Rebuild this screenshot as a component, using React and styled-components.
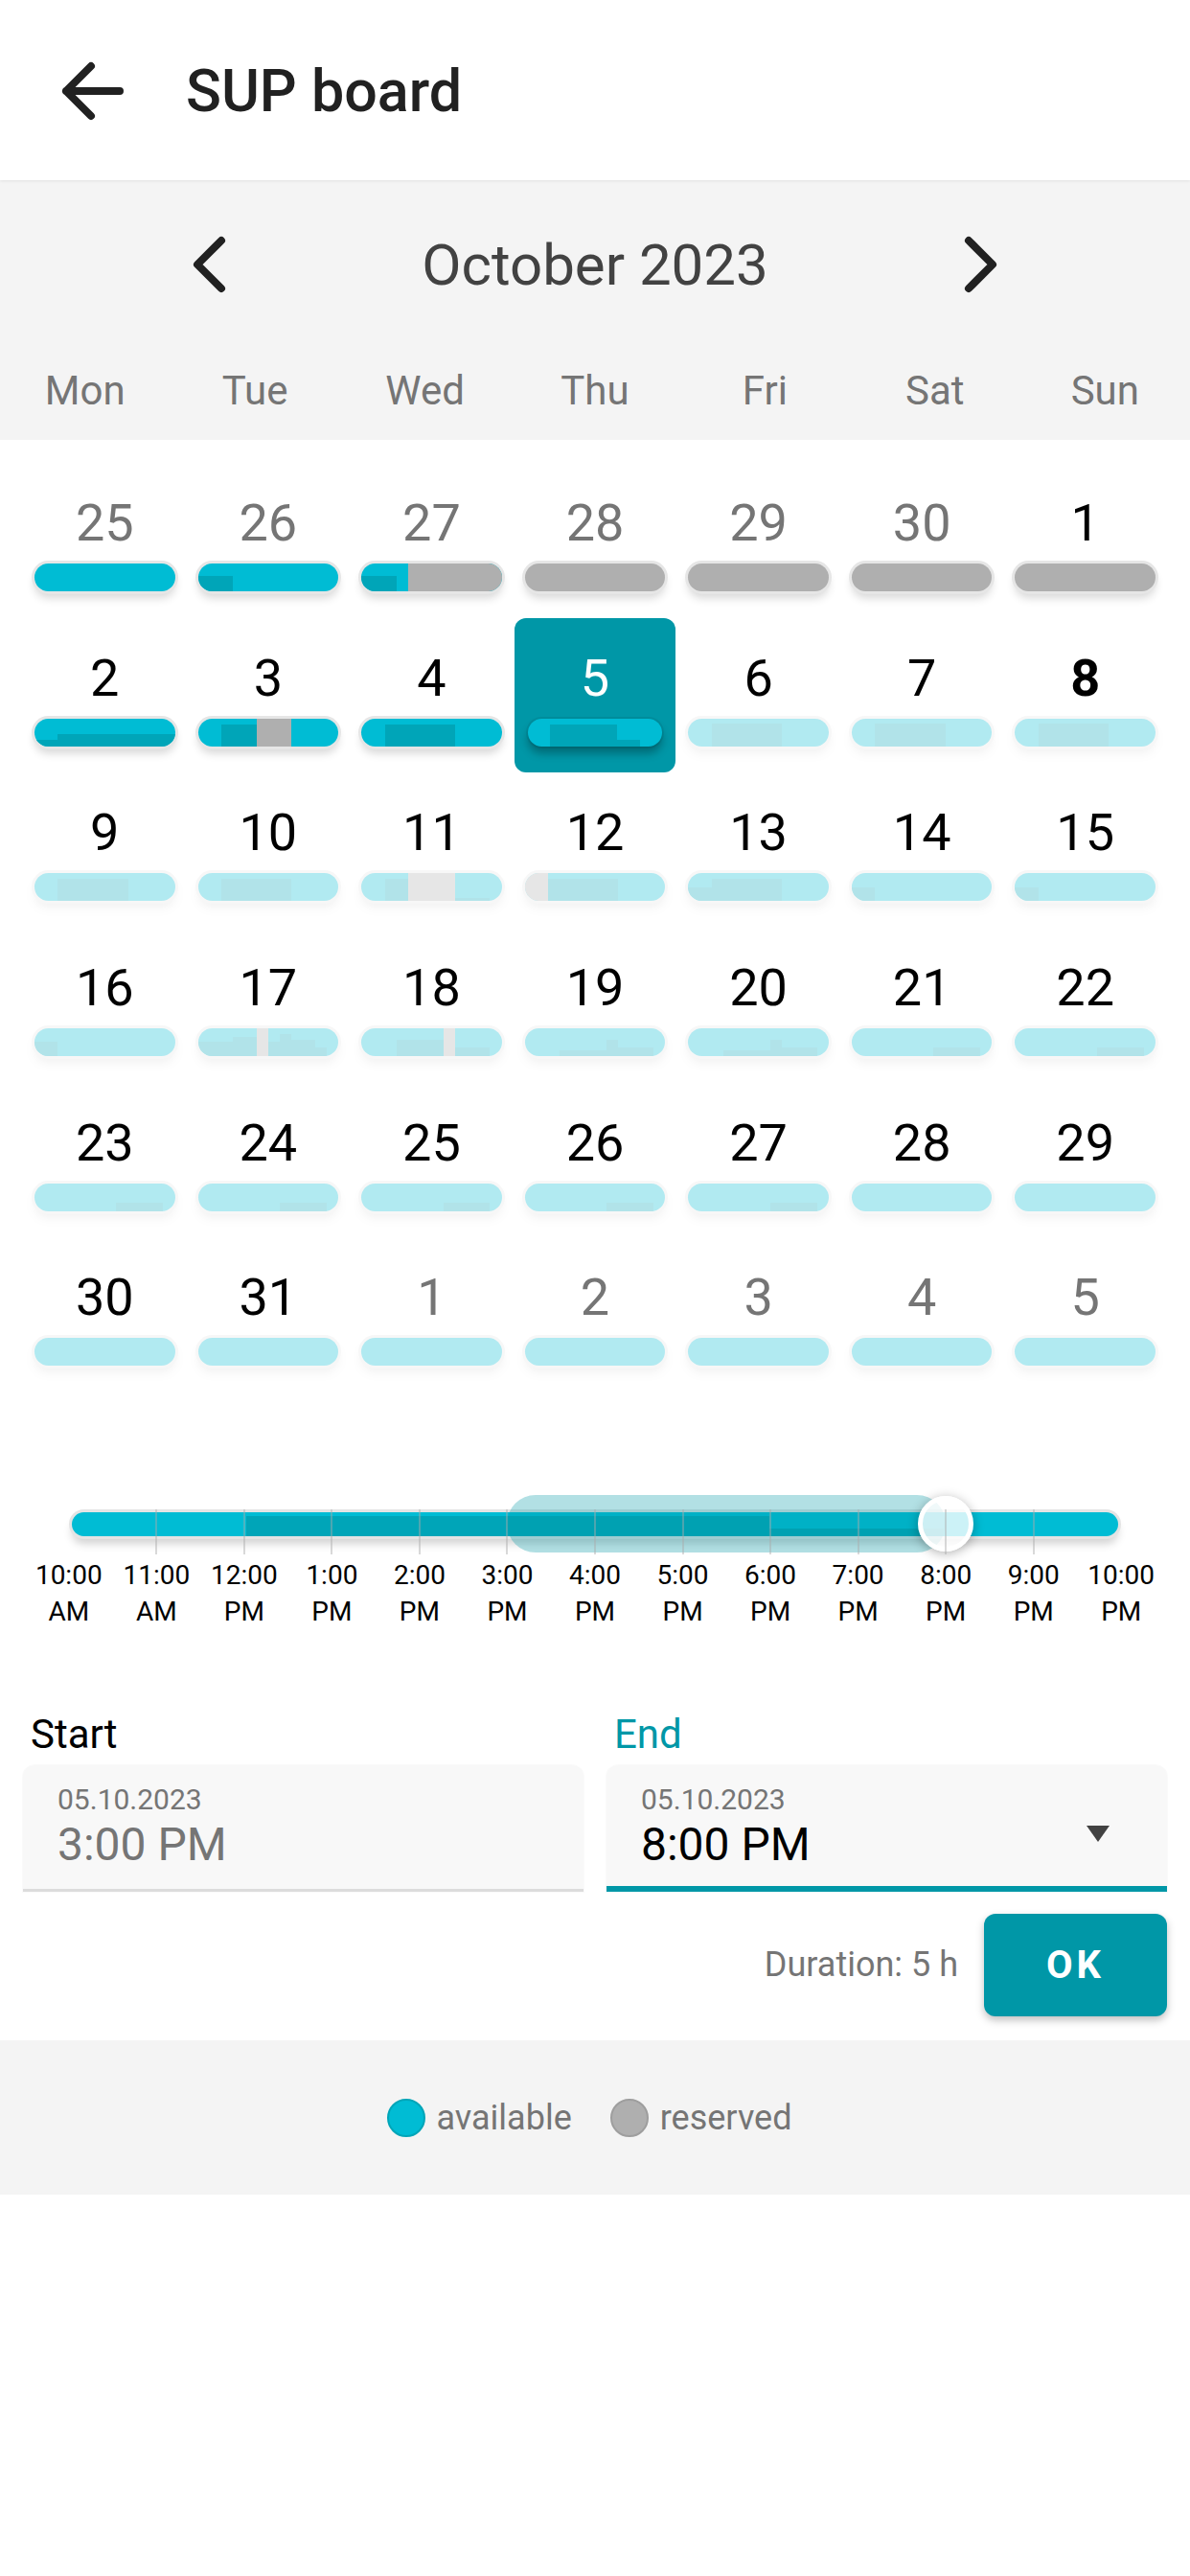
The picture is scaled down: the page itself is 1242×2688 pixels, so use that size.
import styled, { createGlobalStyle } from 'styled-components';

const CYAN = '#00bcd4';
const DARK = '#00a5b8';
const GREY = '#afafaf';
const TEAL = '#0097a7';

const GlobalStyle = createGlobalStyle`
  html, body {
    margin: 0;
    padding: 0;
    background: #fff;
  }
  body {
    font-family: Roboto, "Noto Sans", Arial, sans-serif;
    -webkit-font-smoothing: antialiased;
  }
  * {
    box-sizing: border-box;
  }
`;

// segments: [fromHour, toHour, heightPercent, reserved?]
const weeks = [
    [
        {n: 25, out: true, segs: []},
        {n: 26, out: true, segs: [[0, 3, 55]]},
        {n: 27, out: true, segs: [[0, 3, 55], [4, 12, 100, true]]},
        {n: 28, out: true, res: true, segs: []},
        {n: 29, out: true, res: true, segs: []},
        {n: 30, out: true, res: true, segs: []},
        {n: 1, res: true, segs: []},
    ],
    [
        {n: 2, segs: [[0, 2, 22], [2, 12, 44]]},
        {n: 3, segs: [[2, 5, 79], [5, 8, 100, true]]},
        {n: 4, segs: [[2, 8, 79]]},
        {n: 5, selected: true, segs: [[2, 8, 79], [8, 10, 22]]},
        {n: 6, pale: true, segs: [[2, 8, 80]]},
        {n: 7, pale: true, segs: [[2, 8, 80]]},
        {n: 8, pale: true, bold: true, segs: [[2, 8, 80]]},
    ],
    [
        {n: 9, pale: true, segs: [[2, 8, 80]]},
        {n: 10, pale: true, segs: [[2, 8, 80]]},
        {n: 11, pale: true, segs: [[2, 4, 80], [4, 8, 100, true], [8, 11, 10]]},
        {n: 12, pale: true, segs: [[0, 2, 100, true], [2, 8, 80]]},
        {n: 13, pale: true, segs: [[0, 2, 50], [2, 8, 80]]},
        {n: 14, pale: true, segs: [[0, 2, 50]]},
        {n: 15, pale: true, segs: [[0, 2, 50]]},
    ],
    [
        {n: 16, pale: true, segs: [[0, 2, 50]]},
        {n: 17, pale: true, segs: [[0, 3, 50], [3, 5, 70], [5, 6, 100, true], [6, 7, 50], [7, 8, 80], [8, 10, 60], [10, 11, 30]]},
        {n: 18, pale: true, segs: [[3, 7, 60], [7, 8, 100, true], [8, 11, 30]]},
        {n: 19, pale: true, segs: [[3, 7, 20], [7, 8, 60], [8, 11, 30]]},
        {n: 20, pale: true, segs: [[3, 7, 20], [7, 8, 60], [8, 11, 30]]},
        {n: 21, pale: true, segs: [[7, 11, 30]]},
        {n: 22, pale: true, segs: [[7, 11, 30]]},
    ],
    [
        {n: 23, pale: true, segs: [[7, 11, 30]]},
        {n: 24, pale: true, segs: [[7, 11, 30]]},
        {n: 25, pale: true, segs: [[7, 11, 30]]},
        {n: 26, pale: true, segs: [[7, 11, 30]]},
        {n: 27, pale: true, segs: [[7, 11, 30]]},
        {n: 28, pale: true, segs: []},
        {n: 29, pale: true, segs: []},
    ],
    [
        {n: 30, pale: true, segs: []},
        {n: 31, pale: true, segs: []},
        {n: 1, out: true, pale: true, segs: []},
        {n: 2, out: true, pale: true, segs: []},
        {n: 3, out: true, pale: true, segs: []},
        {n: 4, out: true, pale: true, segs: []},
        {n: 5, out: true, pale: true, segs: []},
    ],
];

const weekDays = ['Mon', 'Tue', 'Wed', 'Thu', 'Fri', 'Sat', 'Sun'];

const hours = [
    ['10:00', 'AM'], ['11:00', 'AM'], ['12:00', 'PM'], ['1:00', 'PM'], ['2:00', 'PM'],
    ['3:00', 'PM'], ['4:00', 'PM'], ['5:00', 'PM'], ['6:00', 'PM'], ['7:00', 'PM'],
    ['8:00', 'PM'], ['9:00', 'PM'], ['10:00', 'PM'],
];

function Segments({segs}) {
    return segs.map(([from, to, h, reserved], i) => (
        <Seg
            key={i}
            $res={reserved}
            style={{
                left: `${(from / 12) * 100}%`,
                width: `${((to - from) / 12) * 100}%`,
                height: `${h}%`,
            }}
        />
    ));
}

function App() {
    return (
        <Page>
            <GlobalStyle />
            <Header>
                <svg width="72" height="72" viewBox="0 0 72 72" fill="none" stroke="#212121" strokeWidth="8" strokeLinecap="round" strokeLinejoin="round">
                    <path d="M65 36H9M35 10L9 36L35 62" />
                </svg>
                <h1>SUP board</h1>
            </Header>

            <CalHead>
                <MonthNav>
                    <NavBtn aria-label="previous month">
                        <svg width="72" height="72" viewBox="0 0 72 72" fill="none" stroke="#212121" strokeWidth="8" strokeLinecap="round" strokeLinejoin="round">
                            <path d="M48 11L23 36L48 61" />
                        </svg>
                    </NavBtn>
                    <MonthTitle>October 2023</MonthTitle>
                    <NavBtn aria-label="next month">
                        <svg width="72" height="72" viewBox="0 0 72 72" fill="none" stroke="#212121" strokeWidth="8" strokeLinecap="round" strokeLinejoin="round">
                            <path d="M24 11L49 36L24 61" />
                        </svg>
                    </NavBtn>
                </MonthNav>
                <WeekRow>
                    {weekDays.map(d => <WeekDay key={d}>{d}</WeekDay>)}
                </WeekRow>
            </CalHead>

            <Grid>
                {weeks.flat().map((day, i) => (
                    <Cell key={i} $selected={day.selected}>
                        <DayNum $out={day.out} $bold={day.bold} $selected={day.selected}>{day.n}</DayNum>
                        <Bar $res={day.res} $pale={day.pale} $selected={day.selected}>
                            <Segments segs={day.segs} />
                        </Bar>
                    </Cell>
                ))}
            </Grid>

            <SliderWrap>
                <Rail>
                    <Track>
                        <Segments segs={[[2, 8, 85], [8, 10, 33]]} />
                    </Track>
                    <Band />
                    <Thumb />
                    {hours.slice(1, 12).map((_, i) => (
                        <Tick key={i} style={{left: `${((i + 1) / 12) * 100}%`}} />
                    ))}
                </Rail>
                <Labels>
                    {hours.map(([t, p], i) => (
                        <TickLabel key={i}>{t}<br />{p}</TickLabel>
                    ))}
                </Labels>
            </SliderWrap>

            <Form>
                <Field>
                    <FieldLabel>Start</FieldLabel>
                    <InputBox>
                        <DateText>05.10.2023</DateText>
                        <TimeText>3:00 PM</TimeText>
                    </InputBox>
                </Field>
                <Field>
                    <FieldLabel $active>End</FieldLabel>
                    <InputBox $active>
                        <DateText>05.10.2023</DateText>
                        <TimeText $active>8:00 PM</TimeText>
                        <Caret />
                    </InputBox>
                </Field>
            </Form>

            <Actions>
                <Duration>Duration: 5 h</Duration>
                <OkButton>OK</OkButton>
            </Actions>

            <Legend>
                <LegendItem><Dot />available</LegendItem>
                <LegendItem><Dot $res />reserved</LegendItem>
            </Legend>
        </Page>
    );
}

export default App;

const Page = styled.main`
    width: 1242px;
    min-height: 2688px;
    background: #fff;
`;

const Header = styled.header`
    position: relative;
    z-index: 1;
    height: 188px;
    display: flex;
    align-items: center;
    gap: 62px;
    padding: 2px 0 0 60px;
    background: #fff;
    box-shadow: 0 1px 3px rgba(0, 0, 0, 0.08);

    svg {
        display: block;
        flex-shrink: 0;
    }

    h1 {
        margin: 0;
        font-size: 61px;
        font-weight: 500;
        color: #212121;
    }
`;

const CalHead = styled.section`
    background: #f4f4f4;
    padding: 38px 0 26px;
`;

const MonthNav = styled.div`
    height: 100px;
    display: flex;
    align-items: center;
    justify-content: space-between;
    padding: 0 183px;
`;

const NavBtn = styled.button`
    width: 72px;
    height: 72px;
    padding: 0;
    border: 0;
    background: none;
    display: flex;

    svg {
        display: block;
    }
`;

const MonthTitle = styled.div`
    font-size: 60px;
    color: #424242;
`;

const WeekRow = styled.div`
    margin-top: 57px;
    display: grid;
    grid-template-columns: repeat(7, 1fr);
`;

const WeekDay = styled.div`
    text-align: center;
    font-size: 42px;
    line-height: 50px;
    color: #757575;
`;

const Grid = styled.div`
    display: grid;
    grid-template-columns: repeat(7, 1fr);
    grid-auto-rows: 161.67px;
    padding: 24px 24px 0;
`;

const Cell = styled.div`
    display: flex;
    flex-direction: column;
    align-items: center;
    margin: 0 1px;
    padding-top: 31px;
    border-radius: 12px;
    background: ${p => p.$selected ? TEAL : 'transparent'};
`;

const DayNum = styled.div`
    font-size: 54px;
    line-height: 64px;
    font-weight: ${p => p.$bold ? 700 : 400};
    color: ${p => p.$selected ? '#fff' : p.$out ? '#757575' : '#000'};
`;

const Bar = styled.div`
    position: relative;
    align-self: stretch;
    height: 29px;
    margin: 10px ${p => p.$selected ? 14 : 11}px 0;
    border-radius: 15px;
    overflow: hidden;
    background: ${p => p.$res ? GREY : CYAN};
    opacity: ${p => p.$pale ? 0.3 : 1};
    box-shadow: ${p => p.$selected
        ? '0 0 0 2px rgba(0, 0, 0, 0.06), 0 7px 10px rgba(0, 0, 0, 0.3)'
        : '0 0 0 3px #e6e6e6, 0 7px 10px rgba(0, 0, 0, 0.16)'};
`;

const Seg = styled.span`
    position: absolute;
    bottom: 0;
    background: ${p => p.$res ? GREY : DARK};
`;

const SliderWrap = styled.section`
    margin-top: 107px;
    padding: 0 26px;
`;

const Rail = styled.div`
    position: relative;
    height: 62px;
    margin: 0 45.77px;
    padding-top: 18px;
`;

const Track = styled.div`
    position: relative;
    height: 25px;
    margin: 0 3px;
    border-radius: 13px;
    overflow: hidden;
    background: ${CYAN};
    box-shadow: 0 0 0 3px #e4e4e4, 0 8px 10px rgba(0, 0, 0, 0.18);
`;

const Band = styled.div`
    position: absolute;
    top: 0;
    left: calc(5 / 12 * 100%);
    width: calc(5 / 12 * 100%);
    height: 60px;
    border-radius: 30px;
    background: rgba(0, 151, 167, 0.3);
`;

const Thumb = styled.div`
    position: absolute;
    top: 1px;
    left: calc(10 / 12 * 100% - 29px);
    width: 58px;
    height: 58px;
    border-radius: 50%;
    border: 5px solid #fff;
    background: rgba(255, 255, 255, 0.8);
    box-shadow: 0 2px 12px rgba(0, 0, 0, 0.3);
`;

const Tick = styled.span`
    position: absolute;
    top: 15px;
    width: 2px;
    height: 47px;
    margin-left: -1px;
    background: rgba(170, 170, 170, 0.45);
`;

const Labels = styled.div`
    margin-top: 3px;
    display: grid;
    grid-template-columns: repeat(13, 1fr);
`;

const TickLabel = styled.div`
    text-align: center;
    font-size: 28px;
    line-height: 38px;
    color: #000;
`;

const Form = styled.section`
    margin-top: 84px;
    padding: 0 24px;
    display: grid;
    grid-template-columns: 1fr 1fr;
    column-gap: 24px;
`;

const Field = styled.div`
    display: flex;
    flex-direction: column;
`;

const FieldLabel = styled.div`
    padding-left: 8px;
    margin-bottom: 7px;
    font-size: 42px;
    line-height: 50px;
    color: ${p => p.$active ? TEAL : '#000'};
`;

const InputBox = styled.div`
    position: relative;
    height: 132px;
    padding: 18px 36px 0;
    background: #f8f8f8;
    border-radius: 12px 12px 0 0;
    border-bottom: ${p => p.$active ? `6px solid ${TEAL}` : '3px solid #dcdcdc'};
    box-shadow: 0 0 0 1px rgba(0, 0, 0, 0.02);
`;

const DateText = styled.div`
    font-size: 30px;
    line-height: 36px;
    color: #757575;
`;

const TimeText = styled.div`
    font-size: 48px;
    line-height: 58px;
    color: ${p => p.$active ? '#000' : '#757575'};
`;

const Caret = styled.span`
    position: absolute;
    top: 63px;
    right: 60px;
    width: 0;
    height: 0;
    border-left: 12px solid transparent;
    border-right: 12px solid transparent;
    border-top: 17px solid #424242;
`;

const Actions = styled.div`
    margin-top: 23px;
    padding: 0 24px;
    display: flex;
    justify-content: flex-end;
    align-items: center;
    gap: 27px;
`;

const Duration = styled.span`
    font-size: 36px;
    color: #757575;
`;

const OkButton = styled.button`
    width: 191px;
    height: 107px;
    border: 0;
    border-radius: 12px;
    background: ${TEAL};
    color: #fff;
    font-family: inherit;
    font-size: 40px;
    font-weight: 700;
    letter-spacing: 4px;
    box-shadow: 0 4px 8px rgba(0, 0, 0, 0.25);
`;

const Legend = styled.footer`
    margin-top: 25px;
    height: 161px;
    padding: 2px 12px 0 0;
    background: #f4f4f4;
    display: flex;
    align-items: center;
    justify-content: center;
    gap: 40px;
`;

const LegendItem = styled.div`
    display: flex;
    align-items: center;
    gap: 12px;
    font-size: 36px;
    color: #757575;
`;

const Dot = styled.span`
    width: 40px;
    height: 40px;
    border-radius: 50%;
    background: ${p => p.$res ? GREY : CYAN};
    border: 2px solid ${p => p.$res ? '#9e9e9e' : DARK};
`;
